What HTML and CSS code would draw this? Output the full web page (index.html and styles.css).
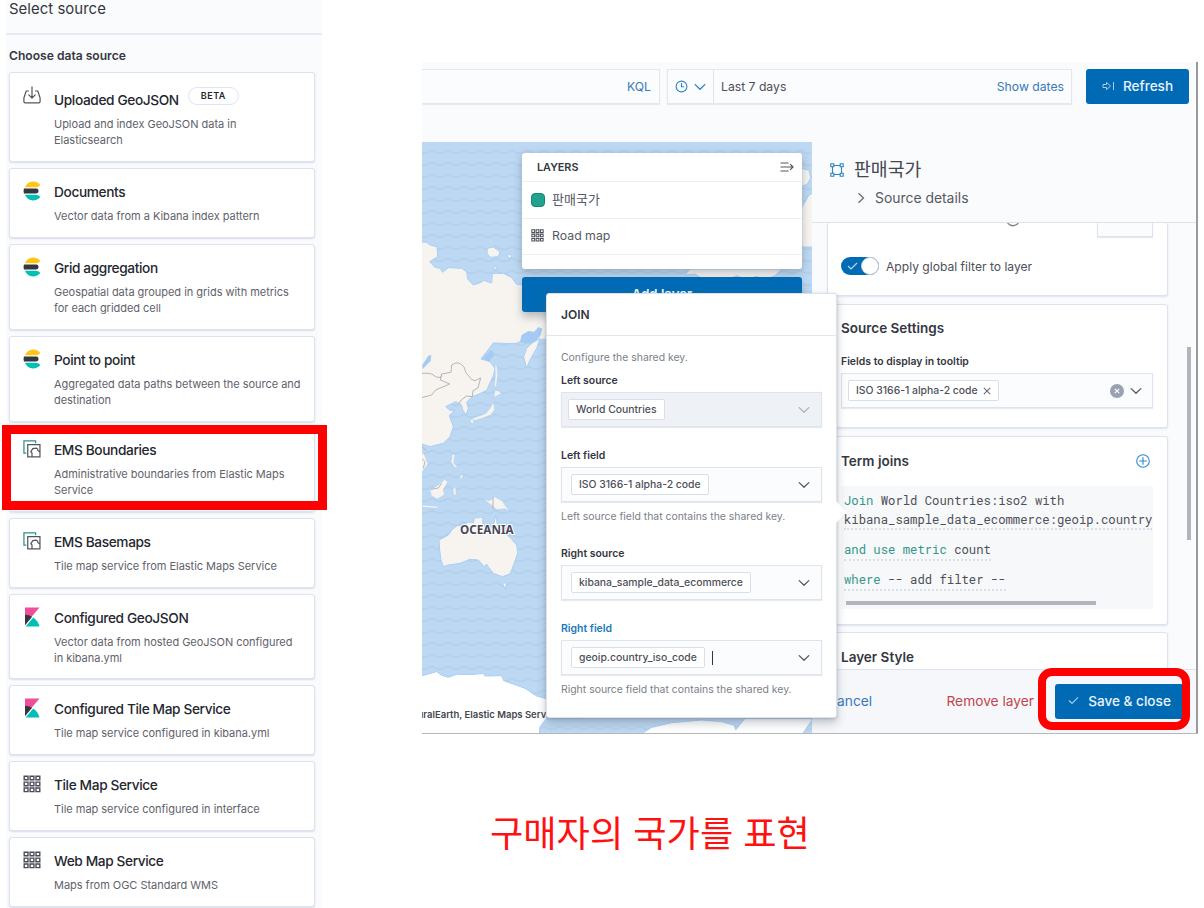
FILE: index.html
```html
<!DOCTYPE html>
<html lang="ko">
<head>
<meta charset="utf-8">
<title>Maps - Select source</title>
<link rel="stylesheet" href="styles.css">
</head>
<body>
<svg class="defs" width="0" height="0">
  <symbol id="i-elastic" viewBox="0 0 18 20"><path fill="#fec514" d="M2 6.2C3.400 2.600 6.500.5 10 .5c3 0 5.600 1.300 7.300 3.400-1.300 1.500-3 2.300-5 2.300z"/><path fill="#343741" d="M.9 7.600h12.300a2.400 2.400 0 0 1 0 4.800H.9a9.500 9.500 0 0 1 0-4.800z"/><path fill="#00bfb3" d="M2 13.800h10.300c2 0 3.700.8 5 2.300A9.400 9.400 0 0 1 10 19.500c-3.500 0-6.600-2.200-8-5.700z"/></symbol>
  <symbol id="i-kibana" viewBox="0 0 18 20"><path fill="#f04e98" d="M2 .5h14.500L2 17.500z"/><path fill="#343741" d="M2 7.800c2.600 0 5 .7 7.100 2L2 18.200z"/><path fill="#00bfb3" d="M10.200 10.600c3.100 2 5.400 5.200 6.200 8.900H2.700z"/></symbol>
  <symbol id="i-grid" viewBox="0 0 18 18"><g fill="none" stroke="#4a4d57" stroke-width="1.400"><path d="M1.200 1.200h3.800v3.600H1.200zM7.100 1.200h3.800v3.600H7.100zM13 1.200h3.800v3.600H13zM1.200 7.100h3.800v3.600H1.200zM7.100 7.100h3.800v3.600H7.100zM13 7.100h3.800v3.600H13zM1.200 13h3.800v3.600H1.200zM7.100 13h3.800v3.600H7.100zM13 13h3.800v3.600H13z"/></g></symbol>
  <symbol id="i-ems" viewBox="0 0 19 19"><path fill="none" stroke="#2f9186" stroke-width="1.300" d="M3.500 13.900H1V.9h12.300v2.600"/><path fill="none" stroke="#53565f" stroke-width="1.300" d="M5 5h12.900v12.900H5zM9.500 17.700v-4l-1.200-1.300 2-3.300 3.800-.6 1.300 1 .3 1.600 2 1.500"/></symbol>
  <symbol id="i-import" viewBox="0 0 18 18"><path fill="none" stroke="#53565f" stroke-width="1.200" stroke-linecap="round" stroke-linejoin="round" d="M5.500 5H3.200L.9 12v3.500c0 .9.500 1.400 1.300 1.400h13.600c.8 0 1.300-.5 1.300-1.400V12l-2.300-7h-2.300M9 .8v11M5.800 8.800 9 12l3.200-3.200"/></symbol>
  <symbol id="i-down" viewBox="0 0 12 8"><path fill="none" stroke="currentColor" stroke-width="1.300" stroke-linecap="round" stroke-linejoin="round" d="M1.200 1.600 6 6.300l4.800-4.700"/></symbol>
</svg>

<main class="page">
  <section class="sources">
    <header class="sources-head">Select source</header>
    <h2 class="sources-label">Choose data source</h2>
    <div class="source-list">
      <article class="card tall"><svg class="icon"><use href="#i-import"/></svg><div><h3>Uploaded GeoJSON<span class="beta">BETA</span></h3><p>Upload and index GeoJSON data in<br>Elasticsearch</p></div></article>
      <article class="card"><svg class="icon"><use href="#i-elastic"/></svg><div><h3>Documents</h3><p>Vector data from a Kibana index pattern</p></div></article>
      <article class="card"><svg class="icon"><use href="#i-elastic"/></svg><div><h3>Grid aggregation</h3><p>Geospatial data grouped in grids with metrics<br>for each gridded cell</p></div></article>
      <article class="card"><svg class="icon"><use href="#i-elastic"/></svg><div><h3>Point to point</h3><p>Aggregated data paths between the source and<br>destination</p></div></article>
      <article class="card chosen"><svg class="icon"><use href="#i-ems"/></svg><div><h3>EMS Boundaries</h3><p>Administrative boundaries from Elastic Maps<br>Service</p></div><span class="mark"></span></article>
      <article class="card"><svg class="icon"><use href="#i-ems"/></svg><div><h3>EMS Basemaps</h3><p>Tile map service from Elastic Maps Service</p></div></article>
      <article class="card"><svg class="icon"><use href="#i-kibana"/></svg><div><h3>Configured GeoJSON</h3><p>Vector data from hosted GeoJSON configured<br>in kibana.yml</p></div></article>
      <article class="card"><svg class="icon"><use href="#i-kibana"/></svg><div><h3>Configured Tile Map Service</h3><p>Tile map service configured in kibana.yml</p></div></article>
      <article class="card"><svg class="icon"><use href="#i-grid"/></svg><div><h3>Tile Map Service</h3><p>Tile map service configured in interface</p></div></article>
      <article class="card"><svg class="icon"><use href="#i-grid"/></svg><div><h3>Web Map Service</h3><p>Maps from OGC Standard WMS</p></div></article>
    </div>
  </section>

  <section class="stage">
    <div class="app">
      <div class="topbar">
        <div class="query">KQL</div>
        <div class="dates">
          <span class="quick"><svg width="13" height="13" viewBox="0 0 13 13" fill="none" stroke="currentColor" stroke-width="1.100"><circle cx="6.500" cy="6.500" r="5.400"/><path d="M6.500 3v3.800h2.700"/></svg><svg width="12" height="8"><use href="#i-down"/></svg></span>
          <span class="range">Last 7 days</span><a class="show">Show dates</a>
        </div>
        <button class="btn refresh"><svg width="13" height="10" viewBox="0 0 13 10" fill="none" stroke="#a9cce6"><path d="M1 3.500h3.500V1.400L8.600 5 4.500 8.600V6.500H1zM11.500 1v8"/></svg>Refresh</button>
      </div>
      <div class="workspace">
        <div class="map">
          <svg class="map-art" viewBox="422 142 390 591" width="390" height="591">
            <defs>
              <pattern id="waves" y="2" width="16" height="12" patternUnits="userSpaceOnUse"><rect width="16" height="12" fill="#bcd8f2"/><path d="M0 4q4 3.500 8 3.500t8-3.500" fill="none" stroke="#b2cee9" stroke-width="1.500"/></pattern>
            </defs>
            <rect x="422" y="142" width="390" height="591" fill="url(#waves)"/>
            <g fill="#f7f4f0" stroke="#a9cff5" stroke-width="3" transform="translate(415 55) scale(.33333)">
              <path d="M10 560 35 562 45 570 66 575 68 605 44 620 60 637 75 640 83 652 100 638 140 640 155 650 158 672 175 690 200 682 205 676 230 684 232 656 265 655 290 668 305 688 330 690 500 690 500 840 380 854 320 858 300 866 235 864 198 912 225 920 240 940 236 960 215 1006 190 1018 170 1026 155 1042 160 1060 153 1080 143 1065 140 1050 122 1040 92 1055 105 1066 118 1066 103 1082 115 1115 105 1145 85 1165 45 1175 15 1165z"/>
              <path d="M217 580 235 576 255 590 250 605 225 607 216 595zM275 600l12-2 4 12-12-3zM233 637l10-3 4 7-8 2z"/>
              <path d="M375 850 365 880 345 915 335 940 326 905 335 880 350 865z"/>
              <path d="M1160 340l22 6 5 22-10 20-17 6zM1160 458l22-38 12-6v162h-34zM810 660l15-18h275l-20 20-30 12-25-10-30 10-30-12-30 15-40-10-25 10-30-20z"/>
            </g>
            <g fill="#f7f4f0" stroke="#a9cff5" stroke-width="1.500" transform="translate(415 290) scale(.33333)">
              <path d="M240 300l10 3 10 8-10 4-13 8zM235 335l4 25-12 15-22 8-30 10-7-7 25-8 20-8 12-15zM167 388l8-2 2 8-5 8-6-7zM240 225l6 3 2 28-4 35-6-3 3-30zM112 492l8 2-4 25 12 12-8 3-12-18zM138 553l6 3-4 10-6-3zM45 600 70 585 90 568 98 577 85 598 88 614 67 627 49 617zM205 628l18 4 16-12 24 14 10 16 13 14-17-8-24 3-17-15zM114 595l8-3 2 25-9-5zM22 645l45 4 5 6-50-3zM172 684l30-6 4 7-20 6z"/>
              <path d="M15 478 30 498 39 522 22 545 15 546z"/>
            </g>
            <g fill="#a4cbf3" transform="translate(415 290) scale(.33333)"><path d="M22 225l18-28 9-2-2 18-25 25zM315 155l5-20 20-12 18 2 12-14 12 5-6 22-18 18-25 5zM203 205l25-25 10 10-15 25z"/></g>
            <g fill="none" stroke="#b9b3b8" stroke-width="3" transform="translate(415 290) scale(.33333)"><path d="M20 250q15-2 30 2 15 14 28 10l2-10 28-5 2-22q10-8 20-6 20 8 20 22 4 12 10 15 8 16 20 16l17-8-8 30-15 8-2 18-18-2-15 12-8 12M20 323l30-8 12-15 42-18-28-12 4-18M48 598l22-4 10-14M234 622v36M20 470l15 12M20 505l10 10-5 20"/></g>
            <g fill="#f7f4f0" stroke="#a9cff5" stroke-width="3" transform="translate(415 500) scale(.33333)">
              <path d="M72 120 100 105 112 88 128 76 146 80 158 66 176 68 178 54 204 52 203 76 225 88 236 72 242 46 248 78 262 94 285 112 305 135 308 160 290 210 284 222 262 230 235 220 222 203 215 192 208 200 190 180 165 178 135 190 100 195 85 200 78 180 74 150zM262 250l13-2-4 20z"/>
              <path fill="#fff" d="M10 530 40 522 65 515 80 526 100 532 125 523 170 524 205 520 210 528 260 527 266 542 330 565 365 588 400 598 500 600 500 655 395 655 375 680 372 710 10 710z"/>
              <path fill="#fff" d="M675 705 710 682 770 668 860 660 920 665 958 676 962 690 990 655 1190 655 1190 662 1160 705z"/>
            </g>
            <text class="region" x="460" y="534">OCEANIA</text>
            <text class="credit" x="417.500" y="718">uralEarth, Elastic Maps Service</text>
          </svg>
          <div class="layers">
            <div class="layers-head">LAYERS<svg width="14" height="12" viewBox="0 0 14 12" fill="none" stroke="#53565f" stroke-width="1.200"><path d="M.5 2h8M.5 6h12.500M.5 10h8M10.200 3.200 13 6l-2.800 2.800"/></svg></div>
            <div class="layer ko"><span class="swatch"></span>판매국가</div>
            <div class="layer"><svg width="13" height="13"><use href="#i-grid"/></svg>Road map</div>
          </div>
          <button class="btn add">Add layer</button>
        </div>

        <aside class="side">
          <header class="side-head">
            <div class="side-title"><svg width="14" height="14" viewBox="0 0 14 14" fill="none" stroke="#2c83c5" stroke-width="1.100"><path d="M2.500 3.500v7M11.500 3.500v7M3.500 2.500h7M3.500 11.500h7"/><path fill="#fafbfd" d="M.8.800h3v3h-3zM10.200.8h3v3h-3zM.8 10.200h3v3h-3zM10.200 10.200h3v3h-3z"/></svg><span>판매국가</span></div>
            <div class="side-sub"><svg width="8" height="12" viewBox="0 0 8 12" fill="none" stroke="#6a6d76" stroke-width="1.300"><path d="M1.500 1.200 6.500 6l-5 4.800"/></svg>Source details</div>
          </header>
          <div class="side-body">
            <div class="panel first">
              <div class="stub"><svg width="14" height="4" viewBox="0 0 14 4"><path fill="none" stroke="#7f828b" stroke-width="1.200" d="M1.500 0q5.500 5.500 11 0"/></svg><span></span></div>
              <div class="filter"><span class="toggle"><svg width="11" height="8" viewBox="0 0 11 8"><path fill="none" stroke="#b9d6ec" stroke-width="1.200" d="M1 4l3 3 6-6"/></svg><i></i></span>Apply global filter to layer</div>
            </div>
            <div class="panel settings">
              <h4>Source Settings</h4>
              <label>Fields to display in tooltip</label>
              <div class="combo"><span class="pill">ISO 3166-1 alpha-2 code<svg width="8" height="8" viewBox="0 0 8 8"><path stroke="#6a6d76" stroke-width="1.100" d="M.8.800l6.400 6.400M7.200.8.800 7.200"/></svg></span><span class="tools"><svg width="14" height="14" viewBox="0 0 14 14"><circle cx="7" cy="7" r="7" fill="#98a2b3"/><path stroke="#fff" stroke-width="1.200" d="M4.800 4.800l4.400 4.400M9.200 4.800 4.800 9.200"/></svg><svg width="12" height="8"><use href="#i-down"/></svg></span></div>
            </div>
            <div class="panel joins">
              <h4>Term joins<svg width="14" height="14" viewBox="0 0 14 14" fill="none" stroke="#2c8bcb" stroke-width="1.100"><circle cx="7" cy="7" r="6.300"/><path d="M7 3.200v7.600M3.200 7h7.600"/></svg></h4>
              <div class="code">
                <div class="expr full"><b>Join</b> World Countries:iso2 with<br>kibana_sample_data_ecommerce:geoip.country</div>
                <div class="expr"><b>and use metric</b> count</div>
                <div class="expr"><b>where</b> -- add filter --</div>
                <div class="hbar"></div>
              </div>
            </div>
            <div class="panel style"><h4>Layer Style</h4></div>
            <div class="vbar"></div>
          </div>
          <footer class="side-foot">
            <a class="cancel">Cancel</a><a class="remove">Remove layer</a>
            <div class="save-wrap"><button class="btn save"><svg width="11" height="9" viewBox="0 0 11 9"><path fill="none" stroke="#a9cce6" stroke-width="1.200" d="M1 4.500 4 7.500 10 1.300"/></svg>Save &amp; close</button><span class="ring"></span></div>
          </footer>
        </aside>
      </div>

      <div class="popover">
        <div class="pop-head">JOIN</div>
        <div class="pop-body">
          <p class="intro">Configure the shared key.</p>
          <label>Left source</label>
          <div class="combo off"><span class="pill">World Countries</span><svg width="12" height="8"><use href="#i-down"/></svg></div>
          <label class="gap">Left field</label>
          <div class="combo in"><span class="pill">ISO 3166-1 alpha-2 code</span><svg width="12" height="8"><use href="#i-down"/></svg></div>
          <p>Left source field that contains the shared key.</p>
          <label class="gap">Right source</label>
          <div class="combo in"><span class="pill">kibana_sample_data_ecommerce</span><svg width="12" height="8"><use href="#i-down"/></svg></div>
          <label class="gap focus">Right field</label>
          <div class="combo in"><span class="pill">geoip.country_iso_code</span><i class="caret"></i><svg width="12" height="8"><use href="#i-down"/></svg></div>
          <p>Right source field that contains the shared key.</p>
        </div>
        <svg class="arrow" width="11" height="22" viewBox="0 0 11 22"><path fill="#fff" d="M0 0l10 11L0 22z"/></svg>
      </div>
    </div>
    <p class="caption">구매자의 국가를 표현</p>
  </section>
</main>
</body>
</html>
```
FILE: styles.css
```css
* { box-sizing: border-box; }
body { margin: 0; background: #fff; color: #343741; font-family: Inter, "Noto Sans CJK KR", sans-serif; }
h2, h3, h4, p { margin: 0; }
svg { display: block; flex: none; }
.defs { position: absolute; }
.page { display: flex; width: 1204px; height: 908px; overflow: hidden; }

/* Source picker */
.sources { width: 316px; margin-left: 6px; background: #fafbfd; flex: none; }
.sources-head { height: 35px; padding: 0 3px; border-bottom: 2px solid #e6eaf3; font-size: 14.900px; line-height: 19px; letter-spacing: .05px; }
.sources-label { height: 37px; padding: 12px 3px 0; font-size: 12.100px; line-height: 18px; font-weight: 600; }
.source-list { display: flex; flex-direction: column; gap: 6px; padding: 0 3px; width: 312px; }
.card { position: relative; display: flex; gap: 13px; flex: none; padding: 12px 8px 12.930px 13px; border: 1px solid #dde2ee; border-radius: 3px; background: #fff; box-shadow: 0 1px 2px #d9deea; }
.card .icon { width: 18px; height: 20px; }
.card h3 { display: flex; align-items: flex-end; height: 22px; font-size: 13.700px; line-height: 22px; font-weight: 450; letter-spacing: -.38px; color: #25272f; white-space: nowrap; }
.card p { margin-top: 5px; font-size: 11px; line-height: 16px; color: #5f626b; white-space: nowrap; letter-spacing: -.03px; }
.tall h3 { height: 26px; }
.beta { align-self: flex-start; margin: 2px 0 0 9px; width: 51px; height: 18px; border: 1px solid #dfe5f0; border-radius: 9px; font-size: 9px; line-height: 16px; font-weight: 600; letter-spacing: .5px; text-align: center; }
.chosen { margin-top: -2px; }
.mark { position: absolute; left: -8px; top: -2px; width: 325px; height: 85px; border: 9px solid #f00; }

/* Maps application */
.stage { position: relative; padding: 62px 0 0 100px; flex: none; }
.app { position: relative; width: 776px; height: 672px; background: #fafbfd; border-right: 2px solid #9a9a9e; border-bottom: 1px solid #b5b7bb; overflow: hidden; }
.topbar { display: flex; height: 80px; padding-top: 7px; font-size: 12.200px; }
.query, .dates { height: 35px; border: 1px solid #e5e7eb; background: #fbfcfd; box-shadow: 0 1px 1px #e8eaee; line-height: 34px; }
.query { width: 238px; border-left: 0; padding-right: 8px; text-align: right; color: #3879b8; }
.dates { display: flex; width: 405px; margin-left: 7px; color: #4d5059; }
.quick { display: flex; align-items: center; gap: 6px; width: 46px; padding-left: 7px; border-right: 1px solid #e2e4e9; color: #2c83c5; }
.range { flex: 1; padding-left: 7px; }
.show { padding-right: 7px; color: #3879b8; }
.btn { display: flex; align-items: center; justify-content: center; border: 0; border-radius: 3px; padding: 0 0 1px; height: 35px; background: #006bb4; color: #eaf3fa; font: 500 13.600px Inter, sans-serif; }
.refresh { width: 103px; margin-left: 14px; gap: 8px; }
.workspace { display: flex; height: 591px; }
.map { position: relative; width: 390px; flex: none; }
.region { font: 700 11.700px "Noto Sans", sans-serif; fill: #4a4858; stroke: #fff; stroke-width: 2px; paint-order: stroke; }
.credit { font: 600 9.500px Inter, sans-serif; fill: #45474f; }
.layers { position: absolute; left: 100px; top: 11px; width: 280px; height: 116px; background: #fff; border-radius: 3px; box-shadow: 0 3px 8px #58606f66; }
.layers-head { display: flex; justify-content: space-between; align-items: center; height: 29px; padding: 0 8px 0 15px; border-bottom: 1px solid #edf0f5; font-size: 10.800px; font-weight: 600; }
.layer { display: flex; align-items: center; gap: 8px; height: 36.500px; padding: 0 0 1px 9px; border-bottom: 1px solid #edf0f5; font-size: 12.300px; color: #565963; }
.layer.ko { font-size: 13px; padding-bottom: 2px; }
.swatch { position: relative; top: 1px; width: 14px; height: 14px; margin-right: -1px; border-radius: 4px; background: #20a28f; border: 1px solid #168672; }
.add { position: absolute; left: 100px; top: 135px; width: 280px; box-shadow: 0 5px 9px #58606f66; font-size: 13.200px; font-weight: 600; }

/* Layer settings flyout */
.side { width: 384px; display: flex; flex-direction: column; }
.side-head { height: 81px; padding: 15px 0 0 18px; border-bottom: 1px solid #dde2ee; flex: none; }
.side-title { display: flex; align-items: center; gap: 10px; height: 25px; font-size: 18.300px; color: #45474f; }
.side-title span { line-height: 25px; padding-bottom: 1px; }
.side-sub { display: flex; align-items: center; gap: 10px; margin-top: 5px; padding-left: 27px; height: 22px; font-size: 13.900px; color: #565963; }
.side-body { position: relative; height: 446px; padding-left: 15px; overflow: hidden; flex: none; }
.panel { width: 341px; margin-bottom: 8px; padding: 0 14px; background: #fff; border: 1px solid #dde2ee; border-radius: 3px; box-shadow: 0 1px 2px #dde2ee; }
.panel h4 { display: flex; justify-content: space-between; align-items: center; font-size: 13.500px; line-height: 19px; height: 20px; font-weight: 600; }
.first { height: 73px; border-top: 0; }
.stub { display: flex; justify-content: flex-end; height: 34px; }
.stub span { width: 56px; height: 14px; margin-left: 77px; border: 1px solid #e0e3ea; border-top: 0; background: #fbfcfd; box-shadow: 0 1px 1px #e8eaee; }
.filter { display: flex; align-items: center; gap: 7px; height: 18px; font-size: 12.100px; color: #4d5059; margin-left: -1px; }
.toggle { display: flex; align-items: center; width: 38px; height: 18px; padding-left: 6px; border-radius: 9px; background: #006bb4; }
.toggle i { width: 18px; height: 18px; margin-left: 3px; border: 1px solid #c9cdd6; border-radius: 50%; background: #fff; flex: none; }
.settings { height: 124px; padding-top: 13px; }
label { display: block; font-size: 10.450px; line-height: 16px; font-weight: 600; }
.settings label { margin-top: 15.500px; }
.settings h4, .settings label, .joins h4, .style h4 { margin-left: -1px; }
.combo { display: flex; align-items: center; height: 35px; border: 1px solid #e0e3ea; background: #fbfcfd; box-shadow: 0 1px 1px #e8eaee; padding: 0 11px 0 6px; color: #565963; }
.settings .combo { margin: 3.500px 0 0 -1px; padding-right: 10px; }
.combo > svg, .tools { margin-left: auto; }
.tools { display: flex; align-items: center; gap: 6px; }
.pill { display: flex; align-items: center; gap: 5px; height: 21px; padding: 0 7px; border: 1px solid #d9deea; border-radius: 2px; background: #fff; font-size: 10.400px; font-weight: 500; white-space: nowrap; color: #4d5059; }
.joins { height: 189px; padding-top: 14px; }
.joins h4 { padding-right: 3px; }
.code { margin: 15px 0 0 -1px; height: 123px; padding: 5px 0 0 3px; background: #f7f8fa; font: 12.240px/18.500px "Roboto Mono", "Liberation Mono", monospace; color: #4d5059; white-space: nowrap; overflow: hidden; }
.expr { width: max-content; margin-bottom: 9.500px; padding-bottom: 1px; border-bottom: 2px dotted #dadeea; height: 21px; }
.expr.full { height: 39px; }
.expr b { font-weight: 400; color: #32968b; }
.hbar { width: 250px; height: 4px; margin: 0 0 0 2px; background: #b3b3bd; }
.style { height: 60px; padding-top: 14px; margin-top: -1px; }
.vbar { position: absolute; left: 375px; top: 124px; width: 4px; height: 193px; background: #b3b3bd; }
.side-foot { display: flex; align-items: center; height: 64px; padding: 0 12px 1px 15px; background: #f5f7fa; border-top: 1px solid #dde2ee; font-size: 13.750px; }
.cancel { color: #3879b8; }
.remove { margin-left: auto; color: #c1454d; }
.save-wrap { position: relative; margin-left: 21px; }
.save { width: 129px; gap: 9px; }
.ring { position: absolute; left: -17px; top: -16px; width: 152px; height: 62px; border: 8px solid #f00; border-radius: 14px; }

/* Join editor */
.popover { position: absolute; left: 124px; top: 231px; width: 291px; height: 425px; border: 1px solid #dde1e8; border-radius: 3px; background: #fff; box-shadow: 0 5px 10px #58606f55, 0 1px 3px #58606f44; }
.pop-head { height: 42px; padding-left: 14px; border-bottom: 1px solid #e2e6ee; font-size: 12px; line-height: 41px; font-weight: 600; }
.pop-body { padding: 14px 14px 0 14px; }
.pop-body p { margin-top: 7px; font-size: 10.430px; line-height: 16px; color: #7b7f89; }
.pop-body .intro { margin: 0 0 7px; }
.pop-body .combo { margin-top: 3px; }
.pop-body .in { padding-left: 9px; }
.pop-body .off { background: #eef1f6; }
.off svg { color: #adb3bf; }
.pop-body .gap { margin-top: 21px; }
.focus { color: #1a78bd; }
.caret { width: 1px; height: 14px; margin-left: 7px; background: #343741; }
.arrow { position: absolute; right: -11px; top: 207px; }

.caption { padding-left: 68px; margin-top: 70px; color: #f11; font: 400 36.200px/54px "Noto Sans CJK KR", sans-serif; white-space: nowrap; }
```
